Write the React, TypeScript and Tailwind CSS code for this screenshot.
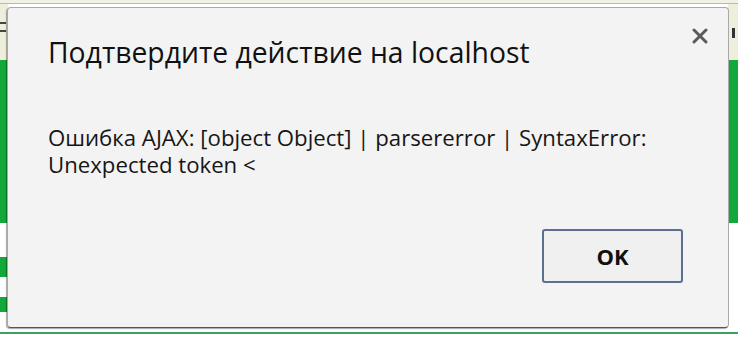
export default function App() {
  return (
    <div className="relative h-[350px] w-[738px] overflow-hidden bg-white font-['Open_Sans',sans-serif]">
      {/* page behind the dialog */}
      <div className="flex h-full flex-col">
        <div className="h-[3px] bg-[#f2f1e6]" />
        <div className="h-px bg-[#b9b9ae]" />
        <div className="flex flex-1 justify-between">
          <div className="flex w-[8px] flex-col">
            <div className="h-[56px] bg-[#eeeedd]">
              <div className="mt-[18px] h-[2px] w-[6px] bg-[#444]" />
              <div className="mt-[6px] h-[2px] w-[6px] bg-[#444]" />
            </div>
            <div className="h-[163px] bg-[#12a83a]" />
            <div className="h-[34px] bg-white" />
            <div className="h-[20px] bg-[#12a83a]" />
            <div className="h-[20px] bg-white" />
            <div className="h-[15px] bg-[#12a83a]" />
          </div>
          <div className="flex w-[10px] flex-col">
            <div className="h-[56px] bg-[#eeeedd]">
              <div className="ml-[4px] mt-[24px] h-[10px] w-[3px] bg-[#333]" />
            </div>
            <div className="h-[163px] bg-[#12a83a]" />
          </div>
        </div>
        <div className="mb-[16px] h-[2px] bg-[#3aa55a]" />
      </div>

      {/* dialog */}
      <div className="absolute left-[7px] top-[7px] flex h-[321px] w-[722px] flex-col rounded-[4px] border border-[#a9a9a9] border-b-[#555] bg-[#f4f3f3] shadow-[-1px_1px_1px_rgba(0,0,0,0.35)]">
        <div className="flex items-start justify-between pl-[40px] pr-[20px] pt-[20px]">
          <h1 className="mt-[6px] text-[28.3px] leading-[36px] text-[#111]">Подтвердите действие на localhost</h1>
          <svg width="16" height="16" viewBox="0 0 16 16">
            <path d="M2 2 L14 14 M14 2 L2 14" stroke="#5b5b5b" strokeWidth="3" strokeLinecap="round" />
          </svg>
        </div>
        <p className="mt-[54px] pl-[40px] pr-[40px] text-[22.2px] leading-[27px] text-[#161616]">
          Ошибка AJAX: [object Object] | parsererror | SyntaxError: Unexpected token &lt;
        </p>
        <div className="mt-auto flex justify-end pb-[44px] pr-[45px]">
          <button className="h-[54px] w-[141px] rounded-[3px] border-2 border-[#5d6f8e] bg-[#f1f0f0] text-[22px] font-bold text-[#111]">
            OK
          </button>
        </div>
      </div>
    </div>
  );
}
